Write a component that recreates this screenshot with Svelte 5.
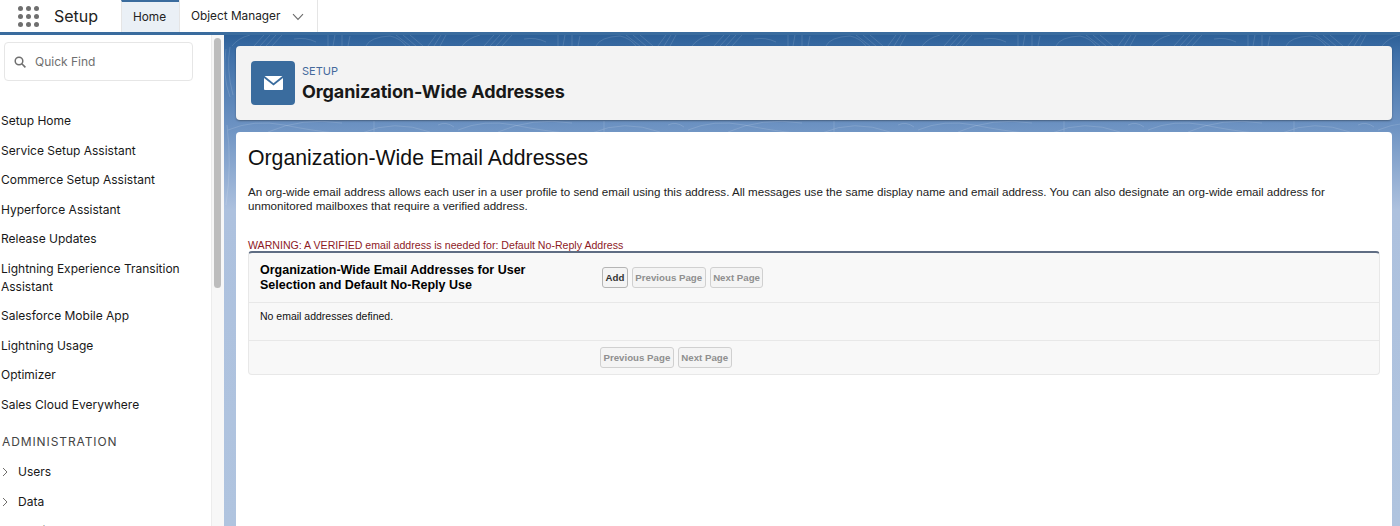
<script lang="ts">
  const navItems = [
    'Setup Home',
    'Service Setup Assistant',
    'Commerce Setup Assistant',
    'Hyperforce Assistant',
    'Release Updates',
    'Lightning Experience Transition Assistant',
    'Salesforce Mobile App',
    'Lightning Usage',
    'Optimizer',
    'Sales Cloud Everywhere',
  ];

  const adminItems = ['Users', 'Data', 'Email'];

  // contour lines in the blue band, one repeat every 230px
  const repeats = Array.from({ length: 6 }, (_, i) => i * 230);
</script>

<div class="page">
  <header class="topbar">
    <button class="launcher" aria-label="App launcher">
      {#each Array(9) as _}
        <span class="dot"></span>
      {/each}
    </button>
    <span class="app-name">Setup</span>
    <nav class="tabs">
      <span class="tab active">Home</span>
      <span class="tab">
        Object Manager
        <svg class="caret" width="12" height="8" viewBox="0 0 12 8"><path d="M1 1.2 L6 6.4 L11 1.2" fill="none" stroke="#6b6b6b" stroke-width="1.1" /></svg>
      </span>
    </nav>
  </header>

  <div class="body">
    <aside class="sidebar">
      <div class="side-scroll">
        <div class="search">
          <svg width="12" height="12" viewBox="0 0 12 12"><circle cx="5" cy="5" r="3.8" fill="none" stroke="#6f6f6f" stroke-width="1.5" /><path d="M7.8 7.8 L11.4 11.4" stroke="#6f6f6f" stroke-width="1.6" /></svg>
          <span>Quick Find</span>
        </div>
        <ul class="nav">
          {#each navItems as item}
            <li>{item}</li>
          {/each}
        </ul>
        <div class="section">ADMINISTRATION</div>
        <ul class="admin">
          {#each adminItems as item}
            <li>
              <svg width="6" height="10" viewBox="0 0 6 10"><path d="M1 1 L5 5 L1 9" fill="none" stroke="#706e6b" stroke-width="1" /></svg>
              {item}
            </li>
          {/each}
        </ul>
      </div>
      <div class="track"><div class="thumb"></div></div>
    </aside>

    <main class="main">
      <svg class="texture" width="1176" height="240" viewBox="0 0 1176 240">
        <g fill="none" stroke="#fff" stroke-opacity="0.17" stroke-width="0.8">
          {#each repeats as x}
            <g transform={`translate(${x} 0)`}>
              <path d="M8 11 Q14 3 26 0 M30 11 L40 0 M36 11 L46 0 M42 11 L52 0 M48 11 L58 0" />
              <path d="M70 4 Q82 2 92 7 M104 0 V11 M111 0 L109 11 M118 0 V11 M126 1 L124 11" />
              <path d="M142 11 Q146 2 166 1 Q176 3 182 11 M172 0 L186 11 M179 0 L192 11 M186 0 L199 11" />
              <path d="M204 11 L212 0 M210 11 L217 0 M216 11 L222 0" />
              <path d="M4 95 Q30 84 60 90 T112 98 M44 97 Q78 82 118 88 M138 98 Q170 84 206 97 M150 86 V97 M214 90 Q222 86 230 92" />
            </g>
          {/each}
          <path d="M2 14 Q-2 40 6 62 M6 12 Q2 34 9 60 M3 90 Q8 130 2 170" />
        </g>
      </svg>
      <section class="page-head">
        <div class="head-icon">
          <svg width="19" height="14" viewBox="0 0 19 14">
            <path d="M0.6 0 H18.4 L9.5 7.2 Z" fill="#fff" />
            <path d="M0 2 L9.5 9.4 L19 2 V13 Q19 14 18 14 H1 Q0 14 0 13 Z" fill="#fff" />
          </svg>
        </div>
        <div class="head-text">
          <div class="eyebrow">SETUP</div>
          <h1>Organization-Wide Addresses</h1>
        </div>
      </section>

      <section class="content">
        <h2>Organization-Wide Email Addresses</h2>
        <p class="intro">An org-wide email address allows each user in a user profile to send email using this address. All messages use the same display name and email address. You can also designate an org-wide email address for unmonitored mailboxes that require a verified address.</p>
        <div class="warning">WARNING: A VERIFIED email address is needed for: Default No-Reply Address</div>
        <div class="block">
          <div class="block-head">
            <h3>Organization-Wide Email Addresses for User Selection and Default No-Reply Use</h3>
            <div class="buttons">
              <button class="btn">Add</button>
              <button class="btn off">Previous Page</button>
              <button class="btn off">Next Page</button>
            </div>
          </div>
          <div class="empty">No email addresses defined.</div>
          <div class="block-foot">
            <button class="btn off">Previous Page</button>
            <button class="btn off">Next Page</button>
          </div>
        </div>
      </section>
    </main>
  </div>
</div>

<style>
  :global(body) {
    margin: 0;
    overflow: hidden;
  }

  .page {
    width: 1400px;
    height: 526px;
    overflow: hidden;
    display: flex;
    flex-direction: column;
    font-family: Inter, "Liberation Sans", sans-serif;
    color: #181818;
  }

  .topbar {
    height: 32px;
    flex-shrink: 0;
    display: flex;
    align-items: center;
    background: #fff;
    border-bottom: 3px solid #3a6c9e;
  }

  .launcher {
    display: grid;
    grid-template-columns: repeat(3, 5px);
    gap: 3px;
    margin-left: 18px;
    padding: 0;
    border: 0;
    background: none;
  }

  .dot {
    width: 5px;
    height: 5px;
    border-radius: 50%;
    background: #6f6f6f;
  }

  .app-name {
    margin-left: 15px;
    width: 67px;
    font-size: 16px;
    color: #222;
  }

  .tabs {
    display: flex;
    height: 100%;
    border-right: 1px solid #e5e5e5;
  }

  .tab {
    display: flex;
    align-items: center;
    gap: 12px;
    padding: 0 13px 0 11px;
    font-size: 11.8px;
    border-left: 1px solid #e5e5e5;
    color: #222;
  }

  .tab.active {
    width: 33px;
    background: #eaf0f6;
    border-top: 2px solid #3a6c9e;
    box-sizing: content-box;
  }

  .caret {
    margin-top: 1px;
  }

  .body {
    flex: 1;
    display: flex;
    min-height: 0;
  }

  .sidebar {
    width: 224px;
    flex-shrink: 0;
    display: flex;
    background: #fff;
  }

  .side-scroll {
    width: 211px;
    flex-shrink: 0;
    overflow: hidden;
    box-sizing: border-box;
    padding: 7px 0 0 1px;
  }

  .search {
    display: flex;
    align-items: center;
    gap: 9px;
    box-sizing: border-box;
    width: 189px;
    height: 39px;
    margin-left: 3px;
    padding-left: 9px;
    border: 1px solid #e6e6e6;
    border-radius: 4px;
    font-size: 12px;
    color: #6f6f6f;
  }

  .nav,
  .admin {
    list-style: none;
    margin: 0;
    padding: 0;
  }

  .nav {
    margin-top: 25px;
    width: 190px;
    font-size: 12px;
    line-height: 18px;
  }

  .nav li {
    padding: 6px 0 5.5px;
  }

  .section {
    margin: 14px 0 0 1px;
    font-size: 12px;
    line-height: 18px;
    letter-spacing: 0.9px;
    color: #444;
  }

  .admin {
    margin-top: 12px;
    font-size: 12px;
    line-height: 18px;
  }

  .admin li {
    display: flex;
    align-items: center;
    gap: 10px;
    margin-left: 1px;
    padding-bottom: 11.5px;
  }

  .track {
    width: 13px;
    background: #f7f7f7;
    border-left: 1px solid #ececec;
    box-sizing: border-box;
    padding: 3px 0 0 2px;
  }

  .thumb {
    width: 7px;
    height: 250px;
    border-radius: 4px;
    background: #bdbdbd;
  }

  .main {
    position: relative;
    flex: 1;
    min-width: 0;
    box-sizing: border-box;
    padding: 11px 8px 0 12px;
    background: linear-gradient(#2d6098 0, #3f70a8 20px, #6c92c2 90px, #adc1de 175px, #b0c4df 100%);
  }

  .texture {
    position: absolute;
    left: 0;
    top: 0;
  }

  .page-head {
    position: relative;
    display: flex;
    align-items: center;
    gap: 7px;
    height: 74px;
    padding-left: 15px;
    background: #f3f3f3;
    border-radius: 4px;
    box-shadow: 0 1px 2px rgba(0, 0, 0, 0.35);
  }

  .head-icon {
    width: 44px;
    height: 44px;
    display: flex;
    align-items: center;
    justify-content: center;
    border-radius: 4px;
    background: #3a6c9e;
  }

  .head-text {
    padding-top: 2px;
  }

  .eyebrow {
    font-size: 11px;
    line-height: 14px;
    color: #44699b;
  }

  h1 {
    margin: 2px 0 0;
    font-size: 18px;
    line-height: 24px;
    font-weight: 700;
    letter-spacing: -0.1px;
    color: #181818;
  }

  .content {
    position: relative;
    height: 420px;
    margin-top: 12px;
    padding: 12px 12px 0;
    background: #fff;
    border-radius: 4px 4px 0 0;
    font-family: "Liberation Sans", Arial, sans-serif;
  }

  h2 {
    margin: 0;
    font-size: 21.25px;
    line-height: 29px;
    font-weight: 400;
    color: #111;
  }

  .intro {
    margin: 12px 0 0;
    font-size: 11.6px;
    line-height: 14px;
    color: #222;
  }

  .warning {
    margin-top: 26px;
    font-size: 10.6px;
    line-height: 13px;
    color: #8e1a1f;
  }

  .block {
    border: 1px solid #e8e8e8;
    border-top: 2px solid #5f6d83;
    margin-top: -1px;
    border-radius: 4px;
    background: #f8f8f8;
  }

  .block-head {
    display: flex;
    align-items: center;
    height: 49px;
    padding-left: 11px;
    border-bottom: 1px solid #e8e8e8;
  }

  h3 {
    width: 290px;
    margin: 0 52px 0 0;
    font-size: 12.5px;
    line-height: 15px;
    font-weight: 700;
    color: #000;
  }

  .buttons,
  .block-foot {
    display: flex;
    gap: 4px;
  }

  .empty {
    height: 38px;
    padding: 7px 0 0 11px;
    box-sizing: border-box;
    font-size: 10.5px;
    line-height: 13px;
    color: #111;
    border-bottom: 1px solid #e8e8e8;
  }

  .block-foot {
    height: 33px;
    align-items: center;
    padding-left: 351px;
  }

  .btn {
    height: 21px;
    padding: 0 2.5px;
    border: 1px solid #b5b5b5;
    border-radius: 3px;
    background: #f4f4f4;
    font-family: "Liberation Sans", Arial, sans-serif;
    font-size: 9.7px;
    font-weight: 700;
    color: #333;
  }

  .btn.off {
    border-color: #d0d0d0;
    color: #8f8f8f;
  }
</style>
